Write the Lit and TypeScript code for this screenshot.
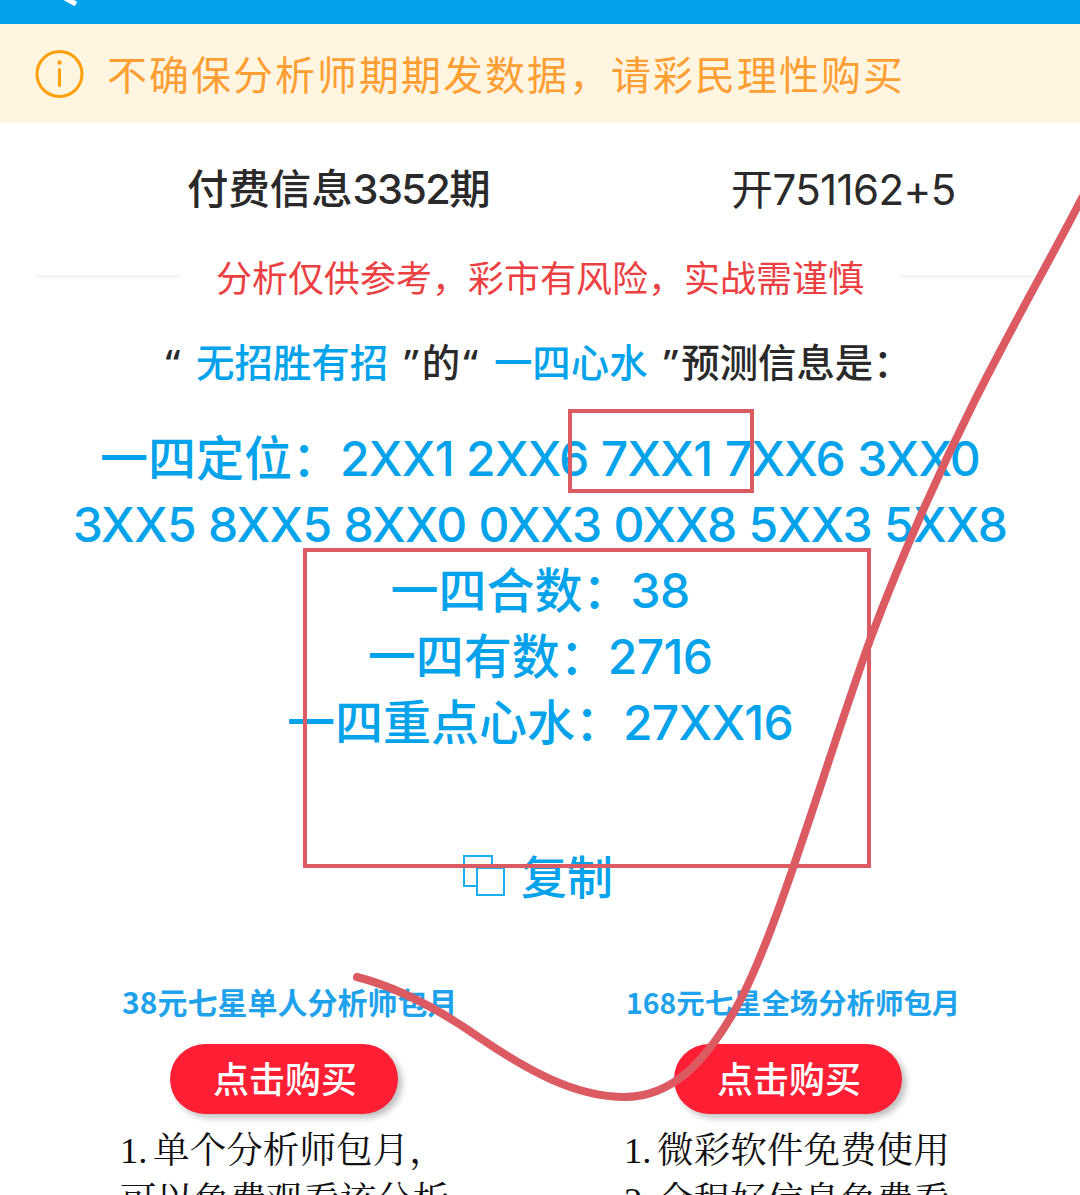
import { LitElement, html, css } from "lit";
import { customElement } from "lit/decorators.js";

@customElement("app-root")
export class AppRoot extends LitElement {
  static styles = css`
    :host { display: block; position: relative; width: 1080px; height: 1195px; overflow: hidden; background: #fff; font-family: Inter, "Noto Sans CJK SC", "Noto Sans", sans-serif; }
    .bar { height: 24px; background: #03a3eb; position: relative; overflow: hidden; }
    .back { position: absolute; left: 60px; top: 0; width: 24px; height: 8px; }
    .notice { height: 99px; background: #fff5e1; display: flex; align-items: center; padding-left: 35px; gap: 22px; color: #ff9f33; font-size: 40px; letter-spacing: 2px; line-height: 1; }
    .notice span { padding-top: 4px; }
    .notice svg { flex: none; width: 50px; height: 50px; }
    .title { display: flex; box-sizing: border-box; height: 130px; padding-bottom: 4px; align-items: center; font-size: 41.4px; font-weight: 500; color: #2a2a2a; padding-left: 187px; }
    .title .l { width: 544px; }
    .title .l em { font-style: normal; letter-spacing: -1.6px; }
    .title .r { font-size: 42px; font-weight: 400; letter-spacing: -0.6px; }
    .risk { display: flex; align-items: center; padding: 0 36px; height: 40px; margin-top: 3px; color: #ec3f42; font-size: 36px; }
    .risk i { display: block; width: 144px; height: 3px; background: #f4f4f4; }
    .risk span { flex: 1; text-align: center; }
    .who { margin-top: 36px; height: 60px; line-height: 60px; text-align: center; font-family: "Noto Sans", "Noto Sans CJK SC", sans-serif; font-size: 38.4px; font-weight: 500; word-spacing: 3px; color: #2a2a2a; white-space: pre; padding-right: 6px; }
    .who b { font-weight: 500; color: #03a3eb; }
    .who i { font-style: normal; margin: 0 3px; }
    .data { margin-top: 34px; text-align: center; color: #03a3eb; font-size: 48px; font-weight: 500; line-height: 66px; white-space: nowrap; }
    .data em { font-style: normal; letter-spacing: -0.7px; }
    .copy { margin-top: 91px; display: flex; justify-content: center; align-items: center; gap: 16px; padding-right: 4px; color: #03a3eb; font-size: 46px; font-weight: 500; line-height: 60px; height: 60px; }
    .copy svg { width: 42px; height: 41px; margin-top: -4px; }
    .cols { position: relative; display: grid; grid-template-columns: 504px 454px; padding-left: 122px; margin-top: 72px; }
    .col h3 { margin: 0; font-family: "Noto Sans CJK SC", "Noto Sans", sans-serif; font-size: 30px; font-weight: 700; line-height: 44px; height: 44px; color: #1fa2ec; white-space: nowrap; }
    .col h3.small { font-size: 28.4px; padding-top: 1px; height: 43px; }
    .col .btn { margin: 21px 0 0 48px; width: 228px; height: 70px; box-sizing: border-box; padding: 0 0 4px 2px; border-radius: 35px; background: #ff1f35; color: #fff; font-family: "Noto Sans CJK SC", sans-serif; font-size: 36px; font-weight: 500; display: flex; align-items: center; justify-content: center; box-shadow: 4px 4px 6px rgba(0,0,0,.25); }
    .col p { margin: 12px 0 0 -2px; font-family: "Liberation Serif", "Noto Serif CJK SC", serif; font-size: 36.6px; line-height: 50px; word-spacing: -3.5px; color: #111; white-space: nowrap; }
    .ink { position: absolute; left: 0; top: 0; width: 1080px; height: 1195px; pointer-events: none; }
  `;

  render() {
    return html`
      <div class="bar">
        <svg class="back" viewBox="0 0 24 8"><path d="M5 -2 L16 4" fill="none" stroke="#fff" stroke-width="5"/></svg>
      </div>
      <div class="notice">
        <svg viewBox="0 0 50 50"><circle cx="24.5" cy="25" r="22.5" fill="none" stroke="#ff9f0a" stroke-width="3"/><circle cx="24.5" cy="13.5" r="2.2" fill="#ff9f0a"/><rect x="23" y="19" width="3" height="19" rx="1.5" fill="#ff9f0a"/></svg>
        <span>不确保分析师期期发数据，请彩民理性购买</span>
      </div>
      <div class="title"><span class="l">付费信息<em>3352</em>期</span><span class="r">开751162+5</span></div>
      <div class="risk"><i></i><span>分析仅供参考，彩市有风险，实战需谨慎</span><i></i></div>
      <div class="who"><i>“</i> <b>无招胜有招</b> <i>”</i>的<i>“</i> <b>一四心水</b> <i>”</i>预测信息是：</div>
      <div class="data">
        <div>一四定位：<em>2XX1 2XX6 7XX1 7XX6 3XX0</em></div>
        <div><em>3XX5 8XX5 8XX0 0XX3 0XX8 5XX3 5XX8</em></div>
        <div>一四合数：<em>38</em></div>
        <div>一四有数：<em>2716</em></div>
        <div>一四重点心水：<em>27XX16</em></div>
      </div>
      <div class="copy">
        <svg viewBox="0 0 42 41" fill="none" stroke="#1aaeee" stroke-width="2"><path d="M14 31 H1 V1 H29 V13"/><rect x="14" y="13" width="27" height="27"/></svg>
        <span>复制</span>
      </div>
      <div class="cols">
        <div class="col">
          <h3>38元七星单人分析师包月</h3>
          <div class="btn">点击购买</div>
          <p>1. 单个分析师包月，<br>可以免费观看该分析</p>
        </div>
        <div class="col">
          <h3 class="small">168元七星全场分析师包月</h3>
          <div class="btn">点击购买</div>
          <p>1. 微彩软件免费使用<br>2. 全程好信息免费看</p>
        </div>
      </div>
      <svg class="ink" viewBox="0 0 1080 1195" fill="none" stroke="#dc5a62">
        <rect x="570" y="411" width="182" height="80" stroke-width="4"/>
        <rect x="305" y="550" width="564" height="316" stroke-width="4"/>
        <path d="M357 977 C400 988 440 1010 480 1038 C530 1072 575 1096 622 1097 C672 1098 705 1062 735 1010 C775 940 820 780 870 640 C900 560 940 470 975 400 C1010 330 1050 260 1082 198" stroke-width="8" stroke-linecap="round"/>
      </svg>
    `;
  }
}
